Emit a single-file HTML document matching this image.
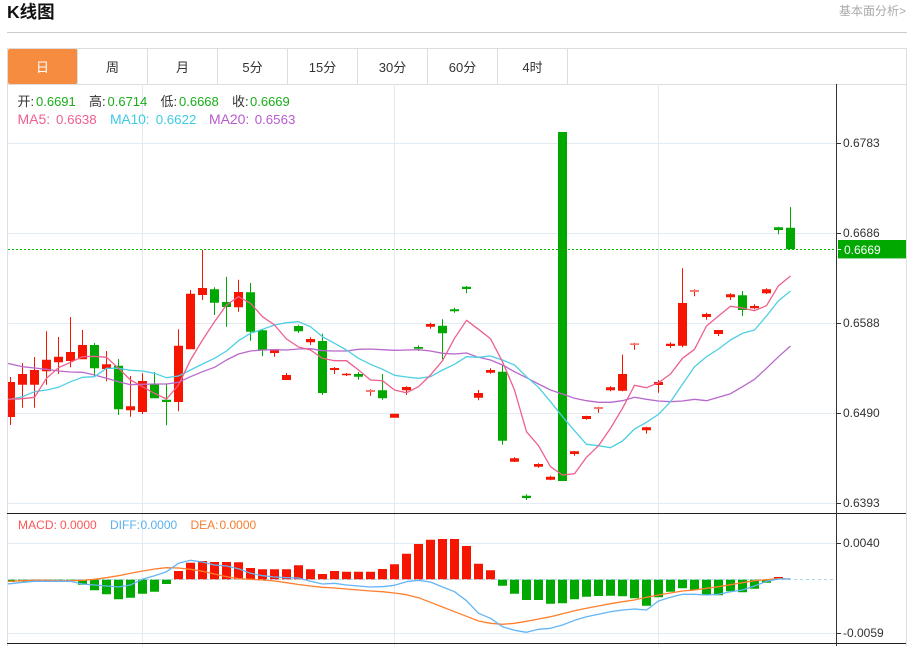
<!DOCTYPE html>
<html lang="zh"><head><meta charset="utf-8"><title>K线图</title>
<style>
html,body{margin:0;padding:0;background:#fff;width:913px;height:646px;overflow:hidden;font-family:"Liberation Sans","Noto Sans CJK SC",sans-serif}
.h{position:absolute;left:7px;top:1px;font-size:17.5px;font-weight:bold;color:#111;line-height:23px}
.m{position:absolute;left:839px;top:3px;font-size:12px;color:#aaa;line-height:16px}
.l{position:absolute;left:7px;top:32px;width:900px;height:1px;background:#ccc}
.tabs{position:absolute;left:7px;top:48px;width:898px;height:35px;border:1px solid #ddd;background:#fff}
.t{position:absolute;top:0;width:69px;height:35px;border-right:1px solid #ddd;text-align:center;font-size:13px;line-height:37px;color:#333}
.a{background:#f58c40;color:#fff;border-radius:2px;border-right:1px solid #ddd}
svg{position:absolute;left:0;top:0}
text{font-family:"Liberation Sans","Noto Sans CJK SC",sans-serif}
</style></head><body>
<div class="h">K线图</div><div class="m">基本面分析&gt;</div><div class="l"></div>
<div class="tabs">
<div class="t a" style="left:0">日</div><div class="t" style="left:70px">周</div><div class="t" style="left:140px">月</div><div class="t" style="left:210px">5分</div><div class="t" style="left:280px">15分</div><div class="t" style="left:350px">30分</div><div class="t" style="left:420px">60分</div><div class="t" style="left:490px">4时</div>
</div>
<svg width="913" height="646" viewBox="0 0 913 646">
<path d="M7.5 84V646M906.5 84V646" stroke="#dcdfe3" fill="none"/>
<path d="M8 143.5H836M8 233.5H836M8 323.5H836M8 413.5H836M8 503.5H836M8 543.5H836M8 633.5H836M142.5 84V646M394.5 84V646M658.5 84V646" stroke="#e3ebf2" fill="none"/>
<path d="M8 249.5H836" stroke="#00c000" stroke-dasharray="2 2" fill="none"/>
<g fill="#f51500"><path d="M10 377h1V425h-1zM8 382h7V417h-7zM22 363.3h1V407.7h-1zM18 374h9V384.7h-9zM34 357h1V407.7h-1zM30 370h9V384.7h-9zM46 331.3h1V384.7h-1zM42 359.7h9V371.3h-9zM58 337h1V374h-1zM54 356.7h9V362.3h-9zM70 317h1V367.3h-1zM66 352h9V361h-9zM82 330h1V359.3h-1zM78 345h9V359.3h-9zM106 351h1V381.3h-1zM102 364.3h9V369h-9zM130 376h1V416.7h-1zM126 406.3h9V410.3h-9zM142 373.3h1V414h-1zM138 381h9V412h-9zM178 329.3h1V411.3h-1zM174 345.7h9V402h-9zM190 290h1V349.3h-1zM186 293.7h9V349.3h-9zM202 250h1V300h-1zM198 288h9V295h-9zM238 279.7h1V311.7h-1zM234 292h9V307.3h-9zM274 350h1V356.7h-1zM270 350h9V353h-9zM286 373h1V380h-1zM282 375h9V380h-9zM310 337.3h1V345h-1zM306 339h9V342.3h-9zM334 367h1V374h-1zM330 368h9V370h-9zM346 373h1V376h-1zM342 373.7h9V375.3h-9zM370 389.3h1V395.7h-1zM394 413.7h1V417.7h-1zM390 413.7h9V417.7h-9zM406 386.3h1V395h-1zM402 387h9V390.3h-9zM430 322.7h1V328.7h-1zM426 324h9V326.7h-9zM478 390h1V400.3h-1zM474 393h9V397.7h-9zM490 368.3h1V373.7h-1zM486 370h9V372.7h-9zM514 457.3h1V462h-1zM510 458.3h9V461.7h-9zM538 463.3h1V467.7h-1zM534 464h9V466.7h-9zM550 475.7h1V480.3h-1zM546 476.7h9V479.7h-9zM574 451h1V455.7h-1zM570 451.3h9V454h-9zM586 415.7h1V419.7h-1zM582 416h9V419h-9zM598 406.7h1V412.7h-1zM610 386.3h1V391.3h-1zM606 387.3h9V390.3h-9zM622 354.7h1V391.3h-1zM618 374h9V390.7h-9zM634 342.7h1V349.7h-1zM646 426.7h1V433.7h-1zM642 427.3h9V430.3h-9zM658 380h1V392.7h-1zM654 382h9V385h-9zM670 342.3h1V347.7h-1zM666 343.7h9V346h-9zM682 268.3h1V347.3h-1zM678 303h9V345.7h-9zM694 289.3h1V296.3h-1zM706 312.7h1V319.7h-1zM702 314h9V317h-9zM718 330h1V336h-1zM714 330h9V334h-9zM730 293.3h1V300h-1zM726 294.3h9V297.3h-9zM754 304.3h1V309.3h-1zM750 306h9V308.3h-9zM766 288.3h1V294h-1zM762 289.3h9V293.3h-9z"/>
<path fill="#fa7a70" d="M366 390h9V392h-9zM594 407h9V409h-9zM630 343.3h9V345h-9zM690 290h9V292h-9z"/></g>
<path fill="#00a800" d="M94 343h1V376h-1zM90 345h9V368.3h-9zM118 359h1V415h-1zM114 365.7h9V409.3h-9zM154 372h1V398.3h-1zM150 384.3h9V398.3h-9zM166 384.3h1V425.3h-1zM162 399.7h9V402h-9zM214 287.3h1V315h-1zM210 289.3h9V302.7h-9zM226 276.7h1V326.7h-1zM222 302h9V307h-9zM250 283h1V340.7h-1zM246 292.3h9V331.7h-9zM262 329.3h1V356.3h-1zM258 330.3h9V350h-9zM298 324.7h1V333h-1zM294 326h9V331.3h-9zM322 333.7h1V395h-1zM318 341h9V393h-9zM358 372h1V379.7h-1zM354 374h9V376.7h-9zM382 374h1V399.7h-1zM378 390.3h9V398.3h-9zM418 345.3h1V351h-1zM414 347h9V348.7h-9zM442 319.3h1V359.3h-1zM438 325.7h9V333.3h-9zM454 307.7h1V312.7h-1zM450 309.3h9V311.3h-9zM466 286h1V293.3h-1zM462 286.7h9V289h-9zM502 365h1V444.7h-1zM498 371.7h9V440.7h-9zM526 494.3h1V500h-1zM522 495.7h9V498h-9zM558 132h9V481h-9zM742 291h1V316h-1zM738 295.3h9V310h-9zM778 226.7h1V234.3h-1zM774 227.3h9V230h-9zM790 207h1V249.3h-1zM786 227.7h9V249.3h-9z"/>
<g fill="none" stroke-width="1.3" stroke-linejoin="round">
<polyline stroke="#b968cc" points="8,363.5 10.5,364 22.5,366.7 34.5,368 46.5,369.3 58.5,371 70.5,372 82.5,372.3 94.5,375 106.5,378.3 118.5,381.7 130.5,384.7 142.5,384.3 154.5,384 166.5,384 178.5,382.3 190.5,376.7 202.5,371.7 214.5,367.3 226.5,360 238.5,354 250.5,351 262.5,350 274.5,349.7 286.5,350 298.5,349 310.5,348.7 322.5,350.7 334.5,351 346.5,351 358.5,349.3 370.5,349 382.5,349.7 394.5,350.3 406.5,350 418.5,349.7 430.5,351 442.5,353.3 454.5,354 466.5,353 478.5,357.3 490.5,360 502.5,365 514.5,371.7 526.5,377.7 538.5,384 550.5,390 562.5,394 574.5,398.3 586.5,400.7 598.5,402.3 610.5,402.3 622.5,400.7 634.5,397.3 646.5,399.3 658.5,401 670.5,401.7 682.5,401 694.5,399.3 706.5,400.7 718.5,397.3 730.5,393.7 742.5,386.7 754.5,379.3 766.5,368.3 778.5,356.7 790.5,346"/>
<polyline stroke="#4fcfe3" points="8,399.5 10.5,399.3 22.5,396.7 34.5,391.7 46.5,390 58.5,387.3 70.5,381.7 82.5,377.3 94.5,376.7 106.5,368.3 118.5,368.3 130.5,370.3 142.5,371 154.5,373.3 166.5,377.7 178.5,376 190.5,370 202.5,364 214.5,358.3 226.5,351 238.5,340.7 250.5,333.3 262.5,329.3 274.5,325 286.5,322.7 298.5,321.7 310.5,326.7 322.5,336.7 334.5,343.3 346.5,350 358.5,358.3 370.5,364.3 382.5,369.3 394.5,375.3 406.5,377 418.5,378.3 430.5,376.7 442.5,370 454.5,364.3 466.5,356.7 478.5,357.3 490.5,356 502.5,360 514.5,365 526.5,376.7 538.5,387.3 550.5,401.7 562.5,416.7 574.5,430.7 586.5,444.3 598.5,445.7 610.5,447.7 622.5,441 634.5,429 646.5,422.3 658.5,414.3 670.5,401.7 682.5,384.3 694.5,366.7 706.5,356.7 718.5,349 730.5,340 742.5,333.3 754.5,330 766.5,316 778.5,300.7 790.5,291"/>
<polyline stroke="#ee5f90" points="8,399.5 10.5,399.3 22.5,398.7 34.5,397.3 46.5,378.3 58.5,367.7 70.5,362.3 82.5,356.7 94.5,356.3 106.5,357.3 118.5,368.3 130.5,380 142.5,386.7 154.5,393.3 166.5,399 178.5,385 190.5,360 202.5,340 214.5,321.7 226.5,305 238.5,296.7 250.5,303.3 262.5,316.7 274.5,325 286.5,339 298.5,347 310.5,350 322.5,358.3 334.5,360.7 346.5,360.7 358.5,370 370.5,380 382.5,380.7 394.5,390 406.5,392.7 418.5,386.7 430.5,375 442.5,360.7 454.5,338.3 466.5,320.3 478.5,329.3 490.5,338.7 502.5,361.7 514.5,390 526.5,431.7 538.5,445.7 550.5,466.7 562.5,475 574.5,473.7 586.5,457.3 598.5,445.7 610.5,428.3 622.5,408.3 634.5,385.3 646.5,387.7 658.5,382.7 670.5,374 682.5,358.3 694.5,349.3 706.5,326 718.5,316 730.5,306.3 742.5,308 754.5,310.7 766.5,305.7 778.5,285.7 790.5,276"/>
</g>
<path fill="#f51500" d="M174 571h9V579.5h-9zM186 562.7h9V579.5h-9zM198 561h9V579.5h-9zM210 562h9V579.5h-9zM222 562h9V579.5h-9zM234 562.3h9V579.5h-9zM246 568h9V579.5h-9zM258 569.3h9V579.5h-9zM270 569.3h9V579.5h-9zM282 569.3h9V579.5h-9zM294 565.3h9V579.5h-9zM306 569.3h9V579.5h-9zM318 574h9V579.5h-9zM330 571h9V579.5h-9zM342 571.7h9V579.5h-9zM354 571.7h9V579.5h-9zM366 571.7h9V579.5h-9zM378 569h9V579.5h-9zM390 564.3h9V579.5h-9zM402 553.7h9V579.5h-9zM414 544h9V579.5h-9zM426 539.7h9V579.5h-9zM438 539h9V579.5h-9zM450 539h9V579.5h-9zM462 546h9V579.5h-9zM474 563.7h9V579.5h-9zM486 570.3h9V579.5h-9zM774 577h9V579h-9z"/>
<path fill="#00a800" d="M8 579.5h7V582h-7zM18 579.5h9V581.5h-9zM30 579.5h9V581h-9zM42 579.5h9V580.5h-9zM54 579.5h9V581h-9zM66 579.5h9V581h-9zM78 579.5h9V584.7h-9zM90 579.5h9V590.3h-9zM102 579.5h9V594.3h-9zM114 579.5h9V599.3h-9zM126 579.5h9V597.7h-9zM138 579.5h9V593.7h-9zM150 579.5h9V591.7h-9zM162 579.5h9V584h-9zM498 579.5h9V585.7h-9zM510 579.5h9V593.7h-9zM522 579.5h9V600h-9zM534 579.5h9V600h-9zM546 579.5h9V603.7h-9zM558 579.5h9V603.3h-9zM570 579.5h9V599.3h-9zM582 579.5h9V596.7h-9zM594 579.5h9V596h-9zM606 579.5h9V595.7h-9zM618 579.5h9V596.3h-9zM630 579.5h9V598.3h-9zM642 579.5h9V605.7h-9zM654 579.5h9V597.3h-9zM666 579.5h9V591.7h-9zM678 579.5h9V588.3h-9zM690 579.5h9V590h-9zM702 579.5h9V594.7h-9zM714 579.5h9V595.3h-9zM726 579.5h9V591.3h-9zM738 579.5h9V592.3h-9zM750 579.5h9V588.7h-9zM762 579.5h9V582.7h-9z"/>
<path d="M8 579.5H833" stroke="#a8d8ee" stroke-dasharray="3 3" fill="none"/>
<g fill="none" stroke-width="1.3" stroke-linejoin="round">
<polyline stroke="#ff7f2e" points="8,581.4 10.5,581.3 22.5,580.7 34.5,580.3 46.5,580.3 58.5,580.7 70.5,580.7 82.5,580.3 94.5,579.3 106.5,577.7 118.5,575.7 130.5,573.3 142.5,571 154.5,569 166.5,567.7 178.5,568 190.5,569.3 202.5,571.3 214.5,574 226.5,576.7 238.5,578.7 250.5,579.3 262.5,580 274.5,581 286.5,582.7 298.5,584.5 310.5,586 322.5,587.3 334.5,588 346.5,589 358.5,590 370.5,591 382.5,591.7 394.5,593 406.5,594.7 418.5,597.7 430.5,602.3 442.5,607 454.5,611.7 466.5,616.3 478.5,621 490.5,623.3 502.5,624.3 514.5,623.3 526.5,621.3 538.5,619 550.5,616.7 562.5,613.7 574.5,610.7 586.5,608.3 598.5,606 610.5,603.7 622.5,601.7 634.5,600 646.5,597.3 658.5,595 670.5,593 682.5,591 694.5,590 706.5,588.3 718.5,586.7 730.5,584.7 742.5,582.7 754.5,580.7 766.5,579.7 778.5,578.7 790.5,579"/>
<polyline stroke="#64b5f6" points="8,583.8 10.5,583.7 22.5,582.3 34.5,581.3 46.5,581.3 58.5,581.3 70.5,581.3 82.5,584 94.5,585 106.5,586 118.5,587 130.5,585 142.5,579.3 154.5,575.7 166.5,571.7 178.5,563.3 190.5,560.3 202.5,562 214.5,565 226.5,566 238.5,568.7 250.5,573.3 262.5,575.7 274.5,577 286.5,577.7 298.5,578 310.5,581.3 322.5,584 334.5,583.3 346.5,585 358.5,586 370.5,587 382.5,586.7 394.5,585.3 406.5,581.7 418.5,580.3 430.5,582 442.5,587 454.5,591.7 466.5,600.7 478.5,613.3 490.5,618.3 502.5,626.7 514.5,630.3 526.5,632.3 538.5,629.3 550.5,628.3 562.5,625 574.5,620.3 586.5,616.7 598.5,614.3 610.5,611.7 622.5,610 634.5,609 646.5,610 658.5,601 670.5,597.3 682.5,594.3 694.5,594.3 706.5,595 718.5,594.3 730.5,591.7 742.5,590 754.5,586 766.5,581.3 778.5,579 790.5,579"/>
</g>
<path d="M7 513.5H906M7 643.5H906" stroke="#222" fill="none"/>
<path d="M836.5 84V646" stroke="#333" fill="none"/>
<path d="M837 143.5h4M837 233.5h4M837 323.5h4M837 413.5h4M837 503.5h4M837 543.5h4M837 633.5h4" stroke="#333" fill="none"/>
<rect x="838" y="240" width="68" height="18.4" fill="#00a800"/>
<path d="M838 249.5h3" stroke="#fff" fill="none"/>
<g font-size="12" fill="#333">
<text x="843" y="147">0.6783</text><text x="843" y="237">0.6686</text><text x="843" y="327">0.6588</text><text x="843" y="417">0.6490</text><text x="843" y="507">0.6393</text><text x="843" y="547">0.0040</text><text x="843" y="637">-0.0059</text>
</g>
<text x="844" y="254" font-size="12" fill="#fff">0.6669</text>
<g font-size="13" fill="#333"><text x="17.5" y="106">开:</text><text x="89" y="106">高:</text><text x="160.500" y="106">低:</text><text x="232" y="106">收:</text></g>
<g font-size="13" fill="#1aad19"><text x="36" y="106">0.6691</text><text x="107.500" y="106">0.6714</text><text x="179" y="106">0.6668</text><text x="250" y="106">0.6669</text></g>
<g font-size="14" fill="#ee5f90"><text x="17.500" y="124">MA5:</text><text x="56" y="124" font-size="13.300">0.6638</text></g>
<g font-size="14" fill="#3fcbe3"><text x="110" y="124" textLength="39.500">MA10:</text><text x="155.700" y="124" font-size="13.300">0.6622</text></g>
<g font-size="14" fill="#b75ccb"><text x="209" y="124" textLength="40.300">MA20:</text><text x="254.700" y="124" font-size="13.300">0.6563</text></g>
<g font-size="12">
<text x="18" y="529" fill="#f55" textLength="39">MACD:</text><text x="60" y="529" fill="#f55">0.0000</text>
<text x="110" y="529" fill="#5ab0f0">DIFF:</text><text x="140.500" y="529" fill="#5ab0f0">0.0000</text>
<text x="190.500" y="529" fill="#f97c2c">DEA:</text><text x="219.500" y="529" fill="#f97c2c">0.0000</text>
</g>
</svg>
</body></html>
